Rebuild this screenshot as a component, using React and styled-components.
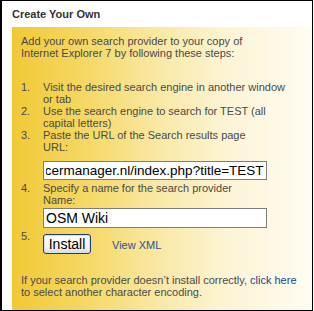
import React, { useEffect, useRef } from "react";
import styled, { createGlobalStyle } from "styled-components";

const Global = createGlobalStyle`
  body {
    margin: 0;
    background: #fff;
  }
`;

const Frame = styled.div`
  width: 313px;
  height: 311px;
  box-sizing: border-box;
  border: 1px solid #000;
  border-left-width: 2px;
  padding-left: 10px;
  display: flex;
  flex-direction: column;
  background: #fff;
  font-family: "Liberation Sans", Arial, sans-serif;
`;

const Title = styled.div`
  height: 26px;
  display: flex;
  align-items: center;
  font-size: 11px;
  font-weight: bold;
  color: #333;
`;

const Panel = styled.div`
  flex: 1;
  padding: 8px 9px 0 9px;
  background: linear-gradient(
    to right,
    #f1c935 0%,
    #f5d866 25%,
    #f9e9a8 50%,
    #fcf4d6 72%,
    #fffcf2 100%
  );
  font-size: 11px;
  color: #4a4a4a;
`;

const Intro = styled.p`
  margin: 0;
  line-height: 12px;
`;

const Steps = styled.div`
  margin-top: 22px;
  line-height: 12px;
`;

const Step = styled.div`
  display: flex;
`;

const Num = styled.span`
  width: 22px;
  flex: none;
`;

const Body = styled.div`
  width: 244px;
`;

const Field = styled.input`
  display: block;
  box-sizing: border-box;
  width: 224px;
  height: ${(p) => p.$h}px;
  margin: ${(p) => p.$top}px 0 2px;
  padding: 0 2px;
  border: 1px solid #7d7d7d;
  background: #fff;
  font-family: "Liberation Sans", Arial, sans-serif;
  font-size: 14px;
  color: #000;
  outline: none;
`;

const UrlInput = styled(Field)`
  font-size: 13.5px;
`;

const Install = styled.button`
  width: 48px;
  height: 20px;
  padding: 0;
  margin-top: 4px;
  border: 1px solid #1f3e73;
  border-radius: 3px;
  background: linear-gradient(#ffffff, #f3f3ee 70%, #dcdad0);
  box-shadow: inset 0 0 0 1px #cfe0f5;
  font-family: "Liberation Sans", Arial, sans-serif;
  font-size: 14px;
  color: #000;
`;

const Link = styled.a`
  color: ${(p) => p.$color || "#1c3f94"};
  text-decoration: none;
`;

const InstallRow = styled.div`
  display: flex;
  align-items: baseline;
  gap: 21px;
`;

const Note = styled.p`
  margin: 20px 0 0;
  line-height: 12px;
`;

function UrlField() {
  const ref = useRef(null);
  useEffect(() => {
    if (ref.current) ref.current.scrollLeft = ref.current.scrollWidth;
  }, []);
  return (
    <UrlInput
      ref={ref}
      $h={19}
      $top={8}
      defaultValue="http://osm.tracermanager.nl/index.php?title=TEST"
    />
  );
}

export default function App() {
  return (
    <>
      <Global />
      <Frame>
        <Title>Create Your Own</Title>
        <Panel>
          <Intro>
            Add your own search provider to your copy of
            <br />
            Internet Explorer 7 by following these steps:
          </Intro>
          <Steps>
            <Step>
              <Num>1.</Num>
              <Body>Visit the desired search engine in another window or tab</Body>
            </Step>
            <Step>
              <Num>2.</Num>
              <Body>Use the search engine to search for TEST (all capital letters)</Body>
            </Step>
            <Step>
              <Num>3.</Num>
              <Body>
                Paste the URL of the Search results page
                <br />
                URL:
                <UrlField />
              </Body>
            </Step>
            <Step>
              <Num>4.</Num>
              <Body>
                Specify a name for the search provider
                <br />
                Name:
                <Field $h={20} $top={2} defaultValue="OSM Wiki" />
              </Body>
            </Step>
            <Step>
              <Num>5.</Num>
              <Body>
                <InstallRow>
                  <Install>Install</Install>
                  <Link href="#" $color="#2d4f95">View XML</Link>
                </InstallRow>
              </Body>
            </Step>
          </Steps>
          <Note>
            If your search provider doesn’t install correctly, <Link href="#">click here</Link>
            <br />
            to select another character encoding.
          </Note>
        </Panel>
      </Frame>
    </>
  );
}
